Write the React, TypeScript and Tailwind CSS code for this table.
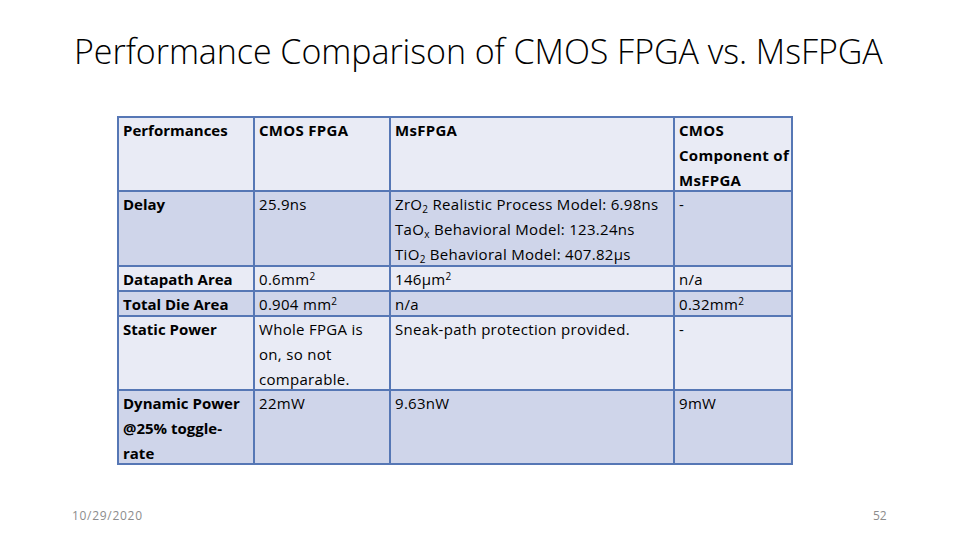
import React from "react";

type Row = { cells: React.ReactNode[]; h: string; bg: string };

const light = "bg-[#e9ebf5]";
const dark = "bg-[#cfd5ea]";

const rows: Row[] = [
  {
    h: "h-[74px]",
    bg: light,
    cells: [
      <b>Performances</b>,
      <b>CMOS FPGA</b>,
      <b>MsFPGA</b>,
      <b>
        CMOS
        <br />
        Component of
        <br />
        MsFPGA
      </b>,
    ],
  },
  {
    h: "h-[75px]",
    bg: dark,
    cells: [
      <b>Delay</b>,
      "25.9ns",
      <>
        ZrO<sub className="text-[10px]">2</sub> Realistic Process Model: 6.98ns
        <br />
        TaO<sub className="text-[10px]">x</sub> Behavioral Model: 123.24ns
        <br />
        TiO<sub className="text-[10px]">2</sub> Behavioral Model: 407.82µs
      </>,
      "-",
    ],
  },
  {
    h: "h-[25px]",
    bg: light,
    cells: [
      <b>Datapath Area</b>,
      <>
        0.6mm<sup className="text-[10px]">2</sup>
      </>,
      <>
        146µm<sup className="text-[10px]">2</sup>
      </>,
      "n/a",
    ],
  },
  {
    h: "h-[25px]",
    bg: dark,
    cells: [
      <b>Total Die Area</b>,
      <>
        0.904 mm<sup className="text-[10px]">2</sup>
      </>,
      "n/a",
      <>
        0.32mm<sup className="text-[10px]">2</sup>
      </>,
    ],
  },
  {
    h: "h-[74px]",
    bg: light,
    cells: [
      <b>Static Power</b>,
      <>
        Whole FPGA is
        <br />
        on, so not
        <br />
        comparable.
      </>,
      "Sneak-path protection provided.",
      "-",
    ],
  },
  {
    h: "h-[72px]",
    bg: dark,
    cells: [
      <b>
        Dynamic Power
        <br />
        @25% toggle-
        <br />
        rate
      </b>,
      "22mW",
      "9.63nW",
      "9mW",
    ],
  },
];

const widths = [
  "w-[136px] border-r-2",
  "w-[136px] border-r-2",
  "w-[284px] border-r-2",
  "w-[116px]",
];

export default function App() {
  return (
    <div className="w-[960px] h-[540px] bg-white relative overflow-hidden font-['Open_Sans',sans-serif] text-black">
      <h1 className="pt-[28px] pl-[74px] text-[34px] leading-[46px] font-light tracking-[-0.05px] text-black whitespace-nowrap">
        Performance Comparison of CMOS FPGA vs. MsFPGA
      </h1>

      <div className="ml-[117px] mt-[42px] w-[676px] border-2 border-[#5677b5] text-[15px] leading-[25px] tracking-[0.3px]">
        {rows.map((r, i) => (
          <div
            key={i}
            className={`flex ${r.h} ${r.bg} ${i < rows.length - 1 ? "border-b-2 border-[#5677b5]" : ""}`}
          >
            {r.cells.map((c, j) => (
              <div
                key={j}
                className={`${widths[j]} shrink-0 border-[#5677b5] pl-[4px] whitespace-nowrap ${j === 0 ? "tracking-normal" : ""}`}
              >
                {c}
              </div>
            ))}
          </div>
        ))}
      </div>

      <div className="absolute left-[72px] top-[507px] text-[12px] tracking-[0.7px] text-[#8c8c8c]">10/29/2020</div>
      <div className="absolute left-[873px] top-[507px] text-[12px] text-[#8c8c8c]">52</div>
    </div>
  );
}
